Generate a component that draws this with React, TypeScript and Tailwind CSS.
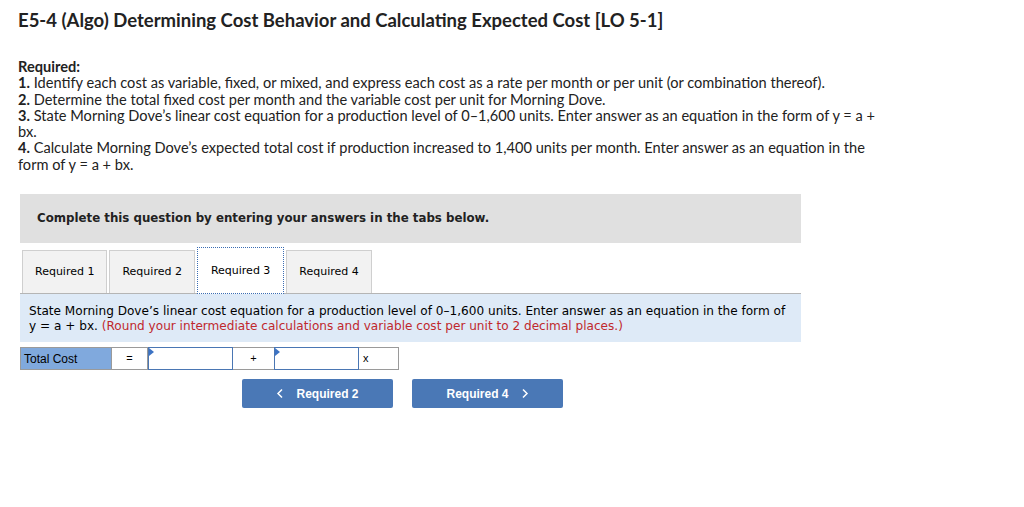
import React from 'react';

const tabs = ['Required 1', 'Required 2', 'Required 3', 'Required 4'];

export default function App() {
  const active = 2;

  return (
    <div className="w-[1024px] h-[507px] bg-white text-[#222] overflow-hidden">
      <div className="px-[18px] pt-[9px] font-['Lato',sans-serif]">
        <h1 className="text-[18.5px] font-bold leading-[22px] text-[#222]">
          E5-4 (Algo) Determining Cost Behavior and Calculating Expected Cost [LO 5-1]
        </h1>

        <div className="mt-[28px] w-[868px] text-[14.6px] leading-[16.3px]">
          <p className="font-bold">Required:</p>
          <p>
            <b>1.</b> Identify each cost as variable, fixed, or mixed, and express each cost as a rate per month or per unit (or combination thereof).
          </p>
          <p>
            <b>2.</b> Determine the total fixed cost per month and the variable cost per unit for Morning Dove.
          </p>
          <p>
            <b>3.</b> State Morning Dove’s linear cost equation for a production level of 0–1,600 units. Enter answer as an equation in the form of y = a + bx.
          </p>
          <p>
            <b>4.</b> Calculate Morning Dove’s expected total cost if production increased to 1,400 units per month. Enter answer as an equation in the form of y = a + bx.
          </p>
        </div>
      </div>

      <div className="ml-[20px] w-[781px] mt-[21px] font-['DejaVu_Sans','Verdana',sans-serif]">
        <div className="bg-[#e0e0e0] h-[49px] flex items-center pl-[17px]">
          <span className="text-[11.8px] font-bold">Complete this question by entering your answers in the tabs below.</span>
        </div>

        <div className="mt-[6px] flex items-end gap-[2px] pl-[2px] h-[44px] relative z-10">
          {tabs.map((t, i) =>
            i === active ? (
              <div
                key={t}
                className="h-[47px] -mb-[1px] pt-[2px] px-[13px] bg-white border border-dotted border-[#3b6db3] flex items-center text-[11px] text-black"
              >
                {t}
              </div>
            ) : (
              <div
                key={t}
                className="h-[43px] px-[12px] bg-[#f2f2f2] border border-[#cfcfcf] border-b-0 flex items-center text-[11px] text-black"
              >
                {t}
              </div>
            )
          )}
        </div>

        <div className="bg-[#deeaf7] border-t border-[#b5b5b5] pt-[10px] pb-[8px] pl-[9px] pr-[6px] text-[12.1px] leading-[15px] text-black">
          State Morning Dove’s linear cost equation for a production level of 0–1,600 units. Enter answer as an equation in the form of y = a + bx.{' '}
          <span className="text-[#c0282d]">(Round your intermediate calculations and variable cost per unit to 2 decimal places.)</span>
        </div>

        <div className="mt-[5px] flex h-[23px] font-['Liberation_Sans',Arial,sans-serif] text-[12px] text-black">
          <div className="w-[92px] bg-[#80a9dd] border border-[#9a9a9a] flex items-center pl-[3px]">Total Cost</div>
          <div className="w-[36px] border-y border-r border-[#9a9a9a] flex items-center justify-center text-[11px]">=</div>
          <div className="w-[85px] border border-[#4a76b3] relative">
            <span className="absolute left-0 top-0 w-0 h-0 border-t-[4px] border-b-[4px] border-l-[5px] border-t-transparent border-b-transparent border-l-[#3c73c4]" />
          </div>
          <div className="w-[41px] border-y border-[#9a9a9a] flex items-center justify-center text-[11px]">+</div>
          <div className="w-[85px] border border-[#4a76b3] relative">
            <span className="absolute left-0 top-0 w-0 h-0 border-t-[4px] border-b-[4px] border-l-[5px] border-t-transparent border-b-transparent border-l-[#3c73c4]" />
          </div>
          <div className="w-[40px] border-y border-r border-[#9a9a9a] flex items-center pl-[4px] text-[11px]">x</div>
        </div>

        <div className="mt-[9px] ml-[222px] flex gap-[19px] font-['Liberation_Sans',Arial,sans-serif]">
          <button className="w-[151px] h-[29px] bg-[#4a78b6] rounded-[2px] text-white text-[12px] font-bold flex items-center justify-center gap-[12px]">
            <svg width="8" height="11" viewBox="0 0 8 11" fill="none">
              <path d="M6 1.5L2 5.5L6 9.5" stroke="white" strokeWidth="1.5" />
            </svg>
            Required 2
          </button>
          <button className="w-[151px] h-[29px] bg-[#4a78b6] rounded-[2px] text-white text-[12px] font-bold flex items-center justify-center gap-[12px]">
            Required 4
            <svg width="8" height="11" viewBox="0 0 8 11" fill="none">
              <path d="M2 1.5L6 5.5L2 9.5" stroke="white" strokeWidth="1.5" />
            </svg>
          </button>
        </div>
      </div>
    </div>
  );
}
